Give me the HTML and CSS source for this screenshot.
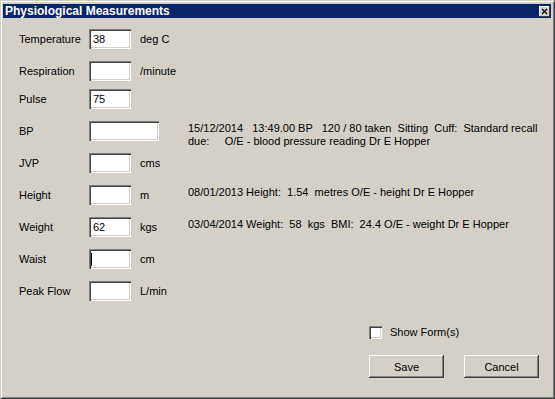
FILE: index.html
```html
<!DOCTYPE html>
<html>
<head>
<meta charset="utf-8">
<link rel="stylesheet" href="styles.css">
</head>
<body>
<div class="window">
  <div class="titlebar">
    <span class="title">Physiological Measurements</span>
    <span class="close"><svg width="11" height="11" viewBox="0 0 11 11"><path d="M3 3 L8 8 M8 3 L3 8" stroke="#000" stroke-width="1.2" fill="none"/></svg></span>
  </div>
  <div class="content">
    <div class="rows">
      <div class="row"><span class="label">Temperature</span><span class="field"><span class="input">38</span></span><span class="unit">deg C</span></div>
      <div class="row tight"><span class="label">Respiration</span><span class="field"><span class="input"></span></span><span class="unit">/minute</span></div>
      <div class="row"><span class="label">Pulse</span><span class="field"><span class="input">75</span></span><span class="unit"></span></div>
      <div class="row"><span class="label">BP</span><span class="field"><span class="input wide"></span></span><span class="unit"></span><span class="info">15/12/2014   13:49.00 BP   120 / 80 taken  Sitting  Cuff:  Standard recall
due:     O/E - blood pressure reading Dr E Hopper</span></div>
      <div class="row"><span class="label">JVP</span><span class="field"><span class="input"></span></span><span class="unit">cms</span></div>
      <div class="row"><span class="label">Height</span><span class="field"><span class="input"></span></span><span class="unit">m</span><span class="info">08/01/2013 Height:  1.54  metres O/E - height Dr E Hopper</span></div>
      <div class="row"><span class="label">Weight</span><span class="field"><span class="input">62</span></span><span class="unit">kgs</span><span class="info">03/04/2014 Weight:  58  kgs  BMI:  24.4 O/E - weight Dr E Hopper</span></div>
      <div class="row"><span class="label">Waist</span><span class="field"><span class="input"><span class="caret"></span></span></span><span class="unit">cm</span></div>
      <div class="row last"><span class="label">Peak Flow</span><span class="field"><span class="input"></span></span><span class="unit">L/min</span></div>
    </div>
    <div class="footer">
      <div class="check"><span class="box"></span><span>Show Form(s)</span></div>
      <div class="buttons"><span class="btn">Save</span><span class="btn">Cancel</span></div>
    </div>
  </div>
</div>
</body>
</html>
```

FILE: styles.css
```css
html, body {
  margin: 0;
  padding: 0;
}
body {
  width: 555px;
  height: 399px;
  background: #d4d0c8;
  font-family: "Liberation Sans", Arial, sans-serif;
  font-size: 11px;
  color: #000;
  overflow: hidden;
}
.window {
  box-sizing: border-box;
  width: 555px;
  height: 399px;
  border: 1px solid;
  border-color: #d4d0c8 #404040 #404040 #d4d0c8;
  box-shadow: inset 1px 1px #fff, inset -1px -1px #808080;
  padding: 2px 3px 3px 2px;
  display: flex;
  flex-direction: column;
}
.titlebar {
  margin-top: 1px;
  height: 14px;
  background: #0a246a;
  color: #fff;
  display: flex;
  align-items: center;
  justify-content: space-between;
  padding-left: 2px;
}
.title {
  font-weight: bold;
  font-size: 12px;
  line-height: 14px;
}
.close {
  width: 11px;
  height: 11px;
  margin-right: 1px;
  background: #d4d0c8;
  box-shadow: inset -1px -1px #404040, inset 1px 1px #fff;
  display: flex;
}
.content {
  flex: 1;
  display: flex;
  flex-direction: column;
  padding: 11px 12px 0 16px;
}
.row {
  display: flex;
  align-items: center;
  height: 20px;
  margin-bottom: 12px;
}
.row.tight {
  margin-bottom: 8px;
}
.row.last {
  margin-bottom: 0;
}
.label {
  width: 70px;
  flex-shrink: 0;
}
.field {
  width: 51px;
  flex-shrink: 0;
  display: flex;
}
.input {
  box-sizing: border-box;
  flex-shrink: 0;
  width: 42px;
  height: 20px;
  line-height: 20px;
  padding-left: 4px;
  background: #fff;
  box-shadow: inset 1px 1px #808080, inset 2px 2px #404040, inset -1px -1px #fff, inset -2px -2px #d4d0c8;
  display: flex;
  align-items: center;
}
.input.wide {
  width: 70px;
}
.caret {
  width: 1px;
  height: 13px;
  margin-left: -2px;
  background: #000;
}
.unit {
  width: 48px;
  flex-shrink: 0;
}
.info {
  align-self: flex-start;
  padding-top: 1px;
  line-height: 13px;
  white-space: pre;
}
.footer {
  align-self: flex-end;
  width: 170px;
  padding-top: 25px;
}
.check {
  display: flex;
  align-items: center;
  height: 13px;
  line-height: 13px;
}
.box {
  width: 13px;
  height: 13px;
  margin-right: 8px;
  background: #fff;
  box-shadow: inset 1px 1px #808080, inset 2px 2px #404040, inset -1px -1px #fff, inset -2px -2px #d4d0c8;
}
.buttons {
  display: flex;
  gap: 20px;
  margin-top: 16px;
}
.btn {
  width: 75px;
  height: 23px;
  display: flex;
  align-items: center;
  justify-content: center;
  background: #d4d0c8;
  box-shadow: inset -1px -1px #404040, inset 1px 1px #fff, inset -2px -2px #808080, inset 2px 2px #d4d0c8;
}
```
